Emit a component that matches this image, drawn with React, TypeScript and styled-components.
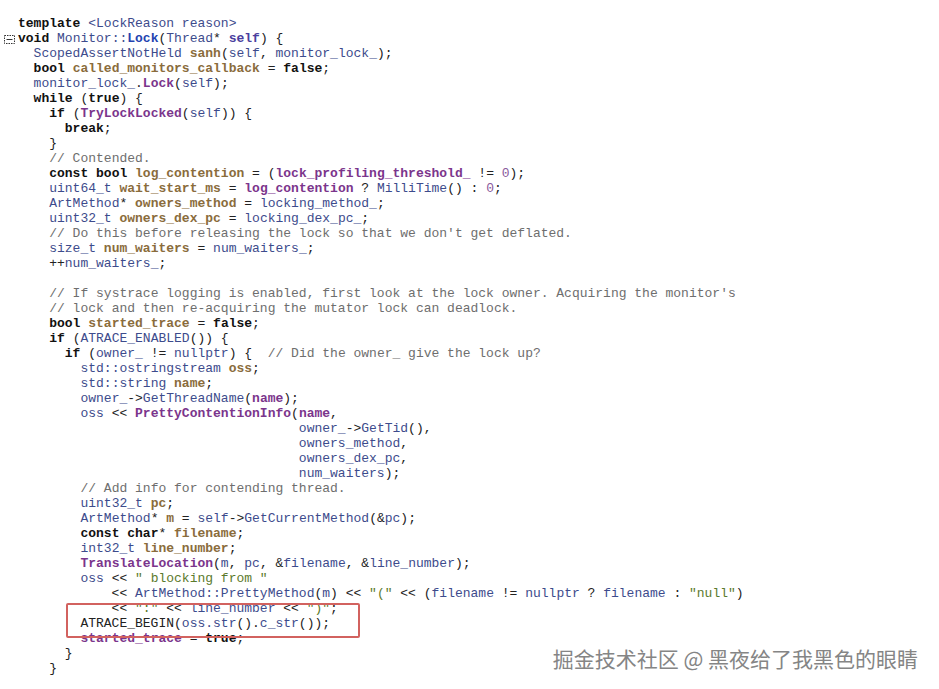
import React from "react";
import styled, { createGlobalStyle } from "styled-components";

const GlobalStyle = createGlobalStyle`
  html, body { margin: 0; padding: 0; background: #ffffff; }
  body { font-family: "Liberation Mono", monospace; }
`;

type Kind = "p" | "k" | "t" | "f" | "r" | "d" | "c" | "m" | "s" | "n";

const KIND: Record<Kind, { color: string; weight: number }> = {
  p: { color: "#222222", weight: 400 },
  k: { color: "#111111", weight: 700 },
  t: { color: "#3d4b8c", weight: 400 },
  f: { color: "#2443b0", weight: 700 },
  r: { color: "#4a3e9e", weight: 700 },
  d: { color: "#8a6c3c", weight: 700 },
  c: { color: "#7b358c", weight: 700 },
  m: { color: "#6e6e6e", weight: 400 },
  s: { color: "#5b7a2c", weight: 400 },
  n: { color: "#8a5a9c", weight: 400 },
};

const SOURCE: string[] = [
  "%k{template} %t{<LockReason reason>}",
  "%k{void} %t{Monitor::}%f{Lock}(%t{Thread}* %r{self}) {",
  "  %t{ScopedAssertNotHeld} %d{sanh}(%t{self}, %t{monitor_lock_});",
  "  %k{bool} %d{called_monitors_callback} = %k{false};",
  "  %t{monitor_lock_}.%c{Lock}(%t{self});",
  "  %k{while} (%k{true}) {",
  "    %k{if} (%c{TryLockLocked}(%t{self})) {",
  "      %k{break};",
  "    }",
  "    %m{// Contended.}",
  "    %k{const bool} %d{log_contention} = (%c{lock_profiling_threshold_} != %n{0});",
  "    %t{uint64_t} %d{wait_start_ms} = %c{log_contention} ? %t{MilliTime}() : %n{0};",
  "    %t{ArtMethod}* %d{owners_method} = %t{locking_method_};",
  "    %t{uint32_t} %d{owners_dex_pc} = %t{locking_dex_pc_};",
  "    %m{// Do this before releasing the lock so that we don't get deflated.}",
  "    %t{size_t} %d{num_waiters} = %t{num_waiters_};",
  "    ++%t{num_waiters_};",
  "",
  "    %m{// If systrace logging is enabled, first look at the lock owner. Acquiring the monitor's}",
  "    %m{// lock and then re-acquiring the mutator lock can deadlock.}",
  "    %k{bool} %d{started_trace} = %k{false};",
  "    %k{if} (%t{ATRACE_ENABLED}()) {",
  "      %k{if} (%t{owner_} != %t{nullptr}) {  %m{// Did the owner_ give the lock up?}",
  "        %t{std::ostringstream} %d{oss};",
  "        %t{std::string} %d{name};",
  "        %t{owner_}->%t{GetThreadName}(%c{name});",
  "        %t{oss} << %c{PrettyContentionInfo}(%c{name},",
  "                                    %t{owner_}->%t{GetTid}(),",
  "                                    %t{owners_method},",
  "                                    %t{owners_dex_pc},",
  "                                    %t{num_waiters});",
  "        %m{// Add info for contending thread.}",
  "        %t{uint32_t} %d{pc};",
  "        %t{ArtMethod}* %d{m} = %t{self}->%t{GetCurrentMethod}(&%t{pc});",
  "        %k{const char}* %d{filename};",
  "        %t{int32_t} %d{line_number};",
  "        %c{TranslateLocation}(%t{m}, %t{pc}, &%t{filename}, &%t{line_number});",
  '        %t{oss} << %s{" blocking from "}',
  '            << %t{ArtMethod::PrettyMethod}(%t{m}) << %s{"("} << (%t{filename} != %t{nullptr} ? %t{filename} : %s{"null"})',
  '            << %s{":"} << %t{line_number} << %s{")"};',
  "        ATRACE_BEGIN(%t{oss.str}().%t{c_str}());",
  "        %c{started_trace} = %k{true};",
  "      }",
  "    }",
];

type Tok = { kind: Kind; text: string };

function parse(line: string): Tok[] {
  const out: Tok[] = [];
  const re = /%(\w)\{([^}]*)\}/g;
  let last = 0;
  let m: RegExpExecArray | null;
  while ((m = re.exec(line)) !== null) {
    if (m.index > last) out.push({ kind: "p", text: line.slice(last, m.index) });
    out.push({ kind: m[1] as Kind, text: m[2] });
    last = m.index + m[0].length;
  }
  if (last < line.length) out.push({ kind: "p", text: line.slice(last) });
  return out;
}

const Page = styled.div`
  position: relative;
  width: 939px;
  height: 689px;
  overflow: hidden;
  background: #ffffff;
`;

const CodeBlock = styled.div`
  position: relative;
  display: flex;
  flex-direction: column;
  padding-top: 16px;
  font-family: "Liberation Mono", "Courier New", monospace;
  font-size: 13px;
  line-height: 15px;
`;

const Line = styled.div`
  display: flex;
  height: 15px;
  align-items: center;
`;

const Gutter = styled.div`
  width: 18px;
  flex: none;
  display: flex;
  align-items: center;
  padding-left: 4px;
  box-sizing: border-box;
`;

const CodeText = styled.span`
  white-space: pre;
`;

const Token = styled.span<{ $kind: Kind }>`
  color: ${(p) => KIND[p.$kind].color};
  font-weight: ${(p) => KIND[p.$kind].weight};
`;

const Highlight = styled.div`
  position: absolute;
  left: 66px;
  top: 603px;
  width: 294px;
  height: 35px;
  box-sizing: border-box;
  border: 2px solid #d2625f;
  border-radius: 2px;
  pointer-events: none;
`;

const Watermark = styled.div`
  position: absolute;
  right: 21px;
  bottom: 19px;
  font-family: "Noto Sans CJK SC", "Noto Sans", sans-serif;
  font-size: 21px;
  line-height: 24px;
  color: #858585;
  text-shadow: 0 0 2px #ffffff, 0 0 1px #ffffff;
  white-space: nowrap;
`;

const FoldIcon = () => (
  <svg width="11" height="9" viewBox="0 0 11 9" style={{ display: "block", marginTop: 1 }}>
    <rect x="0.5" y="0.5" width="10" height="8" fill="none" stroke="#333" strokeWidth="1" strokeDasharray="1.5 1" />
    <line x1="2.5" y1="4.5" x2="8.5" y2="4.5" stroke="#333" strokeWidth="1" />
  </svg>
);

export default function App() {
  return (
    <Page>
      <GlobalStyle />
      <CodeBlock>
        {SOURCE.map((src, i) => (
          <Line key={i}>
            <Gutter>{i === 1 ? <FoldIcon /> : null}</Gutter>
            <CodeText>
              {src === "" ? " " : parse(src).map((t, j) => (
                <Token key={j} $kind={t.kind}>
                  {t.text}
                </Token>
              ))}
            </CodeText>
          </Line>
        ))}
        <Highlight />
      </CodeBlock>
      <Watermark>掘金技术社区 @ 黑夜给了我黑色的眼睛</Watermark>
    </Page>
  );
}
